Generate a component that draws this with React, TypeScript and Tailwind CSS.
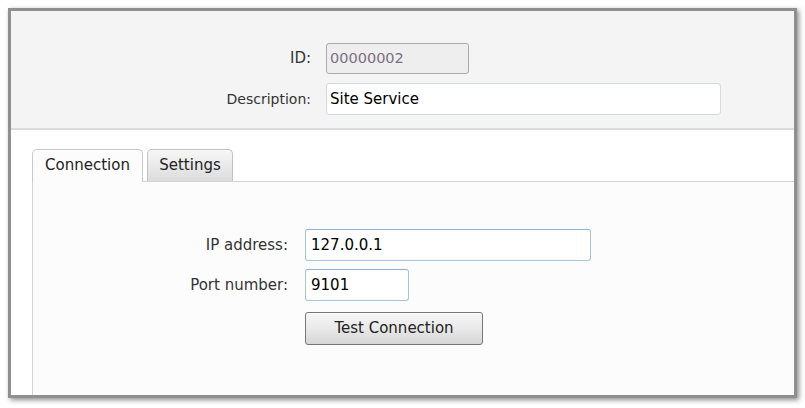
import React from "react";

const font = { fontFamily: '"DejaVu Sans", Verdana, sans-serif' };

export default function App() {
  return (
    <div className="w-[805px] h-[408px] bg-white pl-[8px] pt-[8px] overflow-hidden" style={font}>
      <div className="w-[789px] h-[390px] border-[3px] border-[#8f8f8f] shadow-[2px_2px_5px_rgba(0,0,0,0.45)] flex flex-col bg-white overflow-hidden">
        {/* Header */}
        <div className="h-[119px] shrink-0 bg-[#f4f4f4] border-b-2 border-[#dcdcdc] pt-[32px]">
          <div className="grid grid-cols-[300px_auto] gap-x-[15px] gap-y-[9px] items-center text-[15px]">
            <div className="text-right text-[#333]">ID:</div>
            <div className="w-[143px] h-[31px] rounded-[3px] border border-[#ababab] bg-[#eeeeee] px-[3px] flex items-center text-[#7b7081] text-[14.5px]">
              00000002
            </div>
            <div className="text-right text-[#333] text-[14px]">Description:</div>
            <div className="w-[395px] h-[32px] rounded-[3px] border border-[#d5dae0] bg-white px-[3px] flex items-center text-black">
              Site Service
            </div>
          </div>
        </div>
        {/* Body */}
        <div className="flex-1 flex flex-col pt-[18px] pl-[21px]">
          <div className="flex items-end gap-[4px] h-[33px] shrink-0 relative z-10 text-[15px]">
            <div className="w-[111px] h-[33px] rounded-t-[5px] border border-b-0 border-[#c9c9c9] bg-[#fcfcfc] flex items-center justify-center text-[#222] -mb-px pb-[1px]">
              Connection
            </div>
            <div className="w-[86px] h-[32px] rounded-t-[5px] border border-b-0 border-[#c2c2c2] bg-gradient-to-b from-[#f7f7f7] to-[#dcdcdc] flex items-center justify-center text-[#222]">
              Settings
            </div>
          </div>
          <div className="flex-1 border-t border-l border-[#d3d3d3] bg-[#fcfcfc] pt-[47px]">
            <div className="grid grid-cols-[255px_auto] gap-x-[17px] items-center text-[15px]">
              <div className="text-right text-[#333]">IP address:</div>
              <div className="w-[286px] h-[32px] rounded-[3px] border border-[#a9c3dc] border-t-[#8fb0cf] bg-white px-[5px] flex items-center text-black">
                127.0.0.1
              </div>
              <div className="text-right text-[#333] mt-[8px]">Port number:</div>
              <div className="mt-[8px] w-[104px] h-[32px] rounded-[3px] border border-[#a9c3dc] border-t-[#8fb0cf] bg-white px-[5px] flex items-center text-black">
                9101
              </div>
              <div></div>
              <div className="mt-[11px] w-[178px] h-[33px] rounded-[3px] border border-[#767676] bg-gradient-to-b from-[#f6f6f6] via-[#e9e9e9] to-[#d6d6d6] flex items-center justify-center text-[#222] shadow-[inset_0_1px_0_#ffffff]">
                Test Connection
              </div>
            </div>
          </div>
        </div>
      </div>
    </div>
  );
}
